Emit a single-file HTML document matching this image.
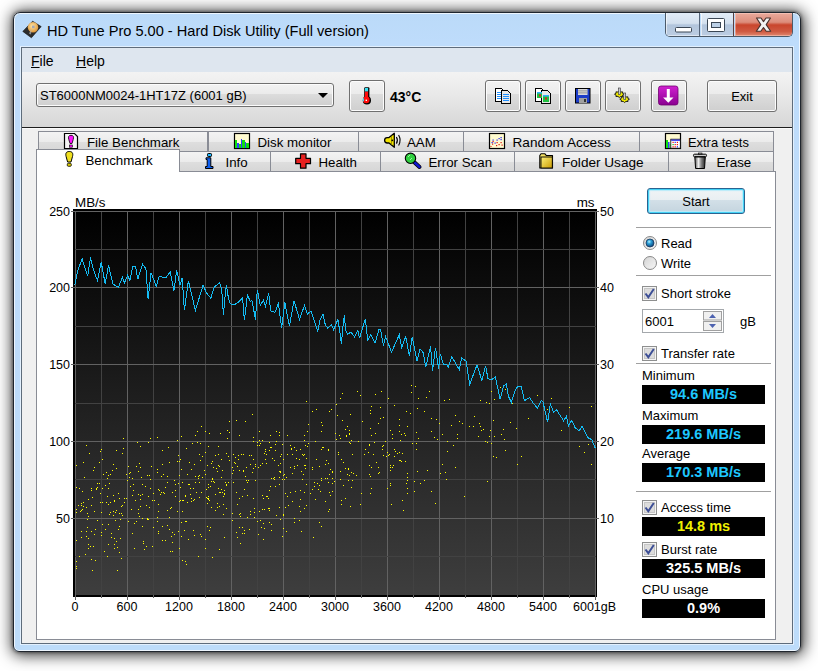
<!DOCTYPE html>
<html><head><meta charset="utf-8">
<style>
*{margin:0;padding:0;box-sizing:border-box}
html,body{width:818px;height:671px;overflow:hidden;background:#fff;font-family:"Liberation Sans",sans-serif;color:#000}
.a{position:absolute}
#win{left:13px;top:12px;width:788px;height:640px;border:1px solid #20262e;border-radius:7px 7px 6px 6px;
 background:linear-gradient(180deg,#bbdaf8 0px,#bedcfb 30px,#bddcfa 100%);
 box-shadow:0 0 3px 1px rgba(0,0,0,.35),1px 1px 15px 2px rgba(0,0,0,.8),inset 0 0 0 1px rgba(255,255,255,.75)}
#client{left:21px;top:47px;width:772px;height:597px;border:1px solid #5e6c7b;background:#f0f0f0;box-shadow:0 0 0 1px rgba(235,245,255,.8)}
#menubar{left:22px;top:48px;width:770px;height:24px;background:#dee6ef}
.menu{font-size:14px;top:53px;line-height:16px}
#toolbar{left:22px;top:72px;width:770px;height:56px;background:linear-gradient(180deg,#f3f3f3 0%,#e9e9e9 40%,#d6d6d6 100%)}
#tbline{left:22px;top:127px;width:770px;height:2px;border-top:1px solid #1e1e1e;border-bottom:1px solid #fbfbfb}
.btn{border:1px solid #707070;border-radius:3px;background:linear-gradient(180deg,#f2f2f2 0%,#ebebeb 45%,#dddddd 45%,#cfcfcf 100%);box-shadow:inset 0 0 0 1px #fcfcfc}
.tab{height:21px;border:1px solid #898c95;border-bottom:none;background:linear-gradient(180deg,#f3f3f3 0%,#ebebeb 50%,#dedede 50%,#d6d6d6 100%)}
.tt{font-size:13.3px;line-height:15px;white-space:nowrap}
#panel{left:36px;top:171px;width:740px;height:469px;border:1px solid #898c95;background:#fff}
.lbl{font-size:12.5px;line-height:14px;white-space:nowrap}
.sep{left:636px;width:135px;height:2px;border-top:1px solid #a0a0a0;border-bottom:1px solid #fff}
.rp{font-size:13px;line-height:15px;white-space:nowrap}
.box{left:642px;width:123px;height:19px;background:#000;font-weight:bold;font-size:14.5px;line-height:19px;text-align:center}
.cb{left:643px;width:13px;height:13px;border:1px solid #8f8f8f;background:linear-gradient(135deg,#dcdcdc,#fff)}
</style></head><body>
<div id="win" class="a"></div>
<!-- title -->
<div class="a" style="left:47px;top:22px;font-size:14.6px;line-height:18px;color:#000;white-space:nowrap" id="title">HD Tune Pro 5.00 - Hard Disk Utility (Full version)</div>
<!-- caption buttons -->
<div class="a" style="left:665px;top:13px;width:128px;height:24px;border:1px solid #4b5a6a;border-top:none;border-radius:0 0 5px 5px;overflow:hidden">
 <div class="a" style="left:0;top:0;width:34px;height:23px;background:linear-gradient(180deg,#e2ecf7 0%,#d3e0ee 45%,#b2c5dc 52%,#bccde2 100%);border-right:1px solid #55657a;box-shadow:inset 1px 0 0 rgba(255,255,255,.6),inset 0 -1px 0 rgba(255,255,255,.5)"></div>
 <div class="a" style="left:35px;top:0;width:33px;height:23px;background:linear-gradient(180deg,#e2ecf7 0%,#d3e0ee 45%,#b2c5dc 52%,#bccde2 100%);border-right:1px solid #5a4040;box-shadow:inset 1px 0 0 rgba(255,255,255,.6),inset 0 -1px 0 rgba(255,255,255,.5)"></div>
 <div class="a" style="left:69px;top:0;width:59px;height:23px;background:linear-gradient(180deg,#eaaa9c 0%,#dc8d7b 40%,#c9452c 52%,#cf5a42 80%,#e08870 100%);box-shadow:inset 0 0 0 1px rgba(255,220,210,.45)"></div>
</div>
<div id="client" class="a"></div>
<div id="menubar" class="a"></div>
<div class="a menu" style="left:31px"><u>F</u>ile</div>
<div class="a menu" style="left:76px"><u>H</u>elp</div>
<div id="toolbar" class="a"></div>
<div id="tbline" class="a"></div>
<!-- dropdown -->
<div class="a btn" style="left:36px;top:83px;width:298px;height:24px"></div>
<div class="a" style="left:40px;top:87.5px;font-size:13px;white-space:nowrap">ST6000NM0024-1HT17Z (6001 gB)</div>
<div class="a" style="left:318px;top:93px;width:0;height:0;border-left:5px solid transparent;border-right:5px solid transparent;border-top:5px solid #000"></div>
<!-- toolbar buttons -->
<div class="a btn" style="left:349px;top:80px;width:36px;height:32px"></div>
<div class="a" style="left:390px;top:89px;font-size:14px;font-weight:bold;white-space:nowrap">43°C</div>
<div class="a btn" style="left:485px;top:80px;width:36px;height:32px"></div>
<div class="a btn" style="left:525px;top:80px;width:36px;height:32px"></div>
<div class="a btn" style="left:565px;top:80px;width:36px;height:32px"></div>
<div class="a btn" style="left:605px;top:80px;width:36px;height:32px"></div>
<div class="a btn" style="left:651px;top:80px;width:36px;height:32px"></div>
<div class="a btn" style="left:707px;top:80px;width:70px;height:32px;font-size:13px;text-align:center;line-height:32px">Exit</div>
<!-- tabs row1 -->
<div class="a tab" style="left:38px;top:131px;width:170px"></div>
<div class="a tab" style="left:208px;top:131px;width:151px"></div>
<div class="a tab" style="left:358px;top:131px;width:106px"></div>
<div class="a tab" style="left:463px;top:131px;width:177px"></div>
<div class="a tab" style="left:639px;top:131px;width:135px"></div>
<!-- tabs row2 -->
<div class="a tab" style="left:179px;top:151px;width:92px"></div>
<div class="a tab" style="left:270px;top:151px;width:111px"></div>
<div class="a tab" style="left:380px;top:151px;width:135px"></div>
<div class="a tab" style="left:514px;top:151px;width:155px"></div>
<div class="a tab" style="left:668px;top:151px;width:106px"></div>
<div id="panel" class="a"></div>
<div class="a tab" style="left:36px;top:149px;width:144px;height:23px;background:#fff"></div>
<div class="a tt" style="left:87px;top:135px">File Benchmark</div>
<div class="a tt" style="left:257.5px;top:135px">Disk monitor</div>
<div class="a tt" style="left:407px;top:135px">AAM</div>
<div class="a tt" style="left:512.5px;top:135px;font-size:13.6px">Random Access</div>
<div class="a tt" style="left:688px;top:135px;font-size:12.9px">Extra tests</div>
<div class="a tt" style="left:85.5px;top:153px">Benchmark</div>
<div class="a tt" style="left:225.5px;top:155px">Info</div>
<div class="a tt" style="left:318.5px;top:155px">Health</div>
<div class="a tt" style="left:428.5px;top:155px">Error Scan</div>
<div class="a tt" style="left:562px;top:155px;font-size:13.6px">Folder Usage</div>
<div class="a tt" style="left:716.5px;top:155px">Erase</div>
<!-- chart -->
<div class="a" style="left:73px;top:209px;width:524px;height:388px;background:#000"></div>
<div class="a" style="left:75px;top:211px;width:521px;height:384px;background:linear-gradient(180deg,#000 0%,#3e3e3e 100%)"></div>
<svg width='818' height='671' style='position:absolute;left:0;top:0'><g stroke-width='1' shape-rendering='crispEdges'><line x1='75.5' y1='211' x2='75.5' y2='595' stroke='#626262'/><line x1='75.5' y1='595' x2='75.5' y2='600' stroke='#626262'/><line x1='101.5' y1='211' x2='101.5' y2='595' stroke='#424242'/><line x1='101.5' y1='595' x2='101.5' y2='598' stroke='#626262'/><line x1='127.5' y1='211' x2='127.5' y2='595' stroke='#626262'/><line x1='127.5' y1='595' x2='127.5' y2='600' stroke='#626262'/><line x1='153.5' y1='211' x2='153.5' y2='595' stroke='#424242'/><line x1='153.5' y1='595' x2='153.5' y2='598' stroke='#626262'/><line x1='179.5' y1='211' x2='179.5' y2='595' stroke='#626262'/><line x1='179.5' y1='595' x2='179.5' y2='600' stroke='#626262'/><line x1='205.5' y1='211' x2='205.5' y2='595' stroke='#424242'/><line x1='205.5' y1='595' x2='205.5' y2='598' stroke='#626262'/><line x1='231.5' y1='211' x2='231.5' y2='595' stroke='#626262'/><line x1='231.5' y1='595' x2='231.5' y2='600' stroke='#626262'/><line x1='257.5' y1='211' x2='257.5' y2='595' stroke='#424242'/><line x1='257.5' y1='595' x2='257.5' y2='598' stroke='#626262'/><line x1='283.5' y1='211' x2='283.5' y2='595' stroke='#626262'/><line x1='283.5' y1='595' x2='283.5' y2='600' stroke='#626262'/><line x1='309.5' y1='211' x2='309.5' y2='595' stroke='#424242'/><line x1='309.5' y1='595' x2='309.5' y2='598' stroke='#626262'/><line x1='335.5' y1='211' x2='335.5' y2='595' stroke='#626262'/><line x1='335.5' y1='595' x2='335.5' y2='600' stroke='#626262'/><line x1='361.5' y1='211' x2='361.5' y2='595' stroke='#424242'/><line x1='361.5' y1='595' x2='361.5' y2='598' stroke='#626262'/><line x1='387.5' y1='211' x2='387.5' y2='595' stroke='#626262'/><line x1='387.5' y1='595' x2='387.5' y2='600' stroke='#626262'/><line x1='413.5' y1='211' x2='413.5' y2='595' stroke='#424242'/><line x1='413.5' y1='595' x2='413.5' y2='598' stroke='#626262'/><line x1='439.5' y1='211' x2='439.5' y2='595' stroke='#626262'/><line x1='439.5' y1='595' x2='439.5' y2='600' stroke='#626262'/><line x1='465.5' y1='211' x2='465.5' y2='595' stroke='#424242'/><line x1='465.5' y1='595' x2='465.5' y2='598' stroke='#626262'/><line x1='491.5' y1='211' x2='491.5' y2='595' stroke='#626262'/><line x1='491.5' y1='595' x2='491.5' y2='600' stroke='#626262'/><line x1='517.5' y1='211' x2='517.5' y2='595' stroke='#424242'/><line x1='517.5' y1='595' x2='517.5' y2='598' stroke='#626262'/><line x1='543.5' y1='211' x2='543.5' y2='595' stroke='#626262'/><line x1='543.5' y1='595' x2='543.5' y2='600' stroke='#626262'/><line x1='569.5' y1='211' x2='569.5' y2='595' stroke='#424242'/><line x1='569.5' y1='595' x2='569.5' y2='598' stroke='#626262'/><line x1='595.5' y1='211' x2='595.5' y2='595' stroke='#626262'/><line x1='595.5' y1='595' x2='595.5' y2='600' stroke='#626262'/><line x1='75' y1='211.5' x2='596' y2='211.5' stroke='#626262'/><line x1='71' y1='211.5' x2='75' y2='211.5' stroke='#626262'/><line x1='596' y1='211.5' x2='599' y2='211.5' stroke='#626262'/><line x1='75' y1='249.5' x2='596' y2='249.5' stroke='#424242'/><line x1='75' y1='287.5' x2='596' y2='287.5' stroke='#626262'/><line x1='71' y1='287.5' x2='75' y2='287.5' stroke='#626262'/><line x1='596' y1='287.5' x2='599' y2='287.5' stroke='#626262'/><line x1='75' y1='326.5' x2='596' y2='326.5' stroke='#424242'/><line x1='75' y1='364.5' x2='596' y2='364.5' stroke='#626262'/><line x1='71' y1='364.5' x2='75' y2='364.5' stroke='#626262'/><line x1='596' y1='364.5' x2='599' y2='364.5' stroke='#626262'/><line x1='75' y1='403.5' x2='596' y2='403.5' stroke='#424242'/><line x1='75' y1='441.5' x2='596' y2='441.5' stroke='#626262'/><line x1='71' y1='441.5' x2='75' y2='441.5' stroke='#626262'/><line x1='596' y1='441.5' x2='599' y2='441.5' stroke='#626262'/><line x1='75' y1='479.5' x2='596' y2='479.5' stroke='#424242'/><line x1='75' y1='518.5' x2='596' y2='518.5' stroke='#626262'/><line x1='71' y1='518.5' x2='75' y2='518.5' stroke='#626262'/><line x1='596' y1='518.5' x2='599' y2='518.5' stroke='#626262'/><line x1='75' y1='556.5' x2='596' y2='556.5' stroke='#424242'/></g></svg><div class='a lbl' style='right:748px;top:204.5px'>250</div><div class='a lbl' style='left:600px;top:204.5px'>50</div><div class='a lbl' style='right:748px;top:281.3px'>200</div><div class='a lbl' style='left:600px;top:281.3px'>40</div><div class='a lbl' style='right:748px;top:358.1px'>150</div><div class='a lbl' style='left:600px;top:358.1px'>30</div><div class='a lbl' style='right:748px;top:434.9px'>100</div><div class='a lbl' style='left:600px;top:434.9px'>20</div><div class='a lbl' style='right:748px;top:511.7px'>50</div><div class='a lbl' style='left:600px;top:511.7px'>10</div><div class='a lbl' style='left:25px;width:100px;text-align:center;top:600px'>0</div><div class='a lbl' style='left:77px;width:100px;text-align:center;top:600px'>600</div><div class='a lbl' style='left:129px;width:100px;text-align:center;top:600px'>1200</div><div class='a lbl' style='left:181px;width:100px;text-align:center;top:600px'>1800</div><div class='a lbl' style='left:233px;width:100px;text-align:center;top:600px'>2400</div><div class='a lbl' style='left:285px;width:100px;text-align:center;top:600px'>3000</div><div class='a lbl' style='left:337px;width:100px;text-align:center;top:600px'>3600</div><div class='a lbl' style='left:389px;width:100px;text-align:center;top:600px'>4200</div><div class='a lbl' style='left:441px;width:100px;text-align:center;top:600px'>4800</div><div class='a lbl' style='left:493px;width:100px;text-align:center;top:600px'>5400</div><div class='a lbl' style='left:573px;top:600px'>6001gB</div><div class='a lbl' style='left:75px;top:196px;font-size:13.4px'>MB/s</div><div class='a lbl' style='right:223.5px;top:196px;font-size:13.4px'>ms</div>
<svg id="chartsvg" width="818" height="671" style="position:absolute;left:0;top:0">
<g fill="#ffff00" shape-rendering="crispEdges" ><rect x='310' y='493' width='1' height='1'/><rect x='339' y='435' width='1' height='1'/><rect x='124' y='498' width='1' height='1'/><rect x='435' y='503' width='1' height='1'/><rect x='415' y='386' width='1' height='1'/><rect x='350' y='414' width='1' height='1'/><rect x='91' y='531' width='1' height='1'/><rect x='345' y='468' width='1' height='1'/><rect x='313' y='537' width='1' height='1'/><rect x='239' y='435' width='1' height='1'/><rect x='76' y='540' width='1' height='1'/><rect x='113' y='511' width='1' height='1'/><rect x='121' y='558' width='1' height='1'/><rect x='137' y='442' width='1' height='1'/><rect x='489' y='436' width='1' height='1'/><rect x='174' y='480' width='1' height='1'/><rect x='136' y='466' width='1' height='1'/><rect x='233' y='454' width='1' height='1'/><rect x='128' y='466' width='1' height='1'/><rect x='229' y='460' width='1' height='1'/><rect x='202' y='477' width='1' height='1'/><rect x='170' y='551' width='1' height='1'/><rect x='205' y='539' width='1' height='1'/><rect x='178' y='531' width='1' height='1'/><rect x='294' y='468' width='1' height='1'/><rect x='199' y='497' width='1' height='1'/><rect x='385' y='441' width='1' height='1'/><rect x='111' y='537' width='1' height='1'/><rect x='394' y='456' width='1' height='1'/><rect x='84' y='477' width='1' height='1'/><rect x='167' y='476' width='1' height='1'/><rect x='263' y='523' width='1' height='1'/><rect x='148' y='496' width='1' height='1'/><rect x='87' y='527' width='1' height='1'/><rect x='241' y='454' width='1' height='1'/><rect x='258' y='534' width='1' height='1'/><rect x='292' y='501' width='1' height='1'/><rect x='400' y='460' width='1' height='1'/><rect x='117' y='570' width='1' height='1'/><rect x='304' y='454' width='1' height='1'/><rect x='91' y='490' width='1' height='1'/><rect x='208' y='487' width='1' height='1'/><rect x='181' y='536' width='1' height='1'/><rect x='305' y='465' width='1' height='1'/><rect x='179' y='548' width='1' height='1'/><rect x='378' y='423' width='1' height='1'/><rect x='219' y='466' width='1' height='1'/><rect x='187' y='502' width='1' height='1'/><rect x='239' y='514' width='1' height='1'/><rect x='114' y='501' width='1' height='1'/><rect x='236' y='420' width='1' height='1'/><rect x='312' y='469' width='1' height='1'/><rect x='149' y='507' width='1' height='1'/><rect x='402' y='500' width='1' height='1'/><rect x='431' y='418' width='1' height='1'/><rect x='81' y='505' width='1' height='1'/><rect x='217' y='503' width='1' height='1'/><rect x='280' y='471' width='1' height='1'/><rect x='143' y='541' width='1' height='1'/><rect x='271' y='524' width='1' height='1'/><rect x='414' y='481' width='1' height='1'/><rect x='186' y='564' width='1' height='1'/><rect x='242' y='496' width='1' height='1'/><rect x='118' y='529' width='1' height='1'/><rect x='328' y='450' width='1' height='1'/><rect x='491' y='443' width='1' height='1'/><rect x='148' y='519' width='1' height='1'/><rect x='190' y='494' width='1' height='1'/><rect x='407' y='473' width='1' height='1'/><rect x='237' y='537' width='1' height='1'/><rect x='184' y='530' width='1' height='1'/><rect x='373' y='454' width='1' height='1'/><rect x='390' y='483' width='1' height='1'/><rect x='283' y='475' width='1' height='1'/><rect x='434' y='437' width='1' height='1'/><rect x='215' y='455' width='1' height='1'/><rect x='323' y='447' width='1' height='1'/><rect x='480' y='400' width='1' height='1'/><rect x='260' y='465' width='1' height='1'/><rect x='139' y='463' width='1' height='1'/><rect x='351' y='440' width='1' height='1'/><rect x='350' y='443' width='1' height='1'/><rect x='407' y='477' width='1' height='1'/><rect x='239' y='498' width='1' height='1'/><rect x='200' y='443' width='1' height='1'/><rect x='485' y='441' width='1' height='1'/><rect x='85' y='554' width='1' height='1'/><rect x='336' y='404' width='1' height='1'/><rect x='131' y='509' width='1' height='1'/><rect x='371' y='406' width='1' height='1'/><rect x='108' y='524' width='1' height='1'/><rect x='245' y='476' width='1' height='1'/><rect x='387' y='488' width='1' height='1'/><rect x='170' y='508' width='1' height='1'/><rect x='177' y='461' width='1' height='1'/><rect x='402' y='453' width='1' height='1'/><rect x='210' y='527' width='1' height='1'/><rect x='451' y='425' width='1' height='1'/><rect x='81' y='531' width='1' height='1'/><rect x='196' y='492' width='1' height='1'/><rect x='418' y='438' width='1' height='1'/><rect x='584' y='452' width='1' height='1'/><rect x='209' y='433' width='1' height='1'/><rect x='270' y='486' width='1' height='1'/><rect x='361' y='493' width='1' height='1'/><rect x='496' y='457' width='1' height='1'/><rect x='99' y='483' width='1' height='1'/><rect x='163' y='474' width='1' height='1'/><rect x='349' y='430' width='1' height='1'/><rect x='416' y='443' width='1' height='1'/><rect x='229' y='432' width='1' height='1'/><rect x='157' y='521' width='1' height='1'/><rect x='464' y='496' width='1' height='1'/><rect x='114' y='500' width='1' height='1'/><rect x='389' y='454' width='1' height='1'/><rect x='181' y='469' width='1' height='1'/><rect x='305' y='445' width='1' height='1'/><rect x='378' y='473' width='1' height='1'/><rect x='457' y='438' width='1' height='1'/><rect x='262' y='495' width='1' height='1'/><rect x='383' y='445' width='1' height='1'/><rect x='205' y='548' width='1' height='1'/><rect x='96' y='488' width='1' height='1'/><rect x='399' y='419' width='1' height='1'/><rect x='120' y='519' width='1' height='1'/><rect x='269' y='442' width='1' height='1'/><rect x='114' y='538' width='1' height='1'/><rect x='474' y='416' width='1' height='1'/><rect x='244' y='530' width='1' height='1'/><rect x='297' y='465' width='1' height='1'/><rect x='116' y='510' width='1' height='1'/><rect x='431' y='431' width='1' height='1'/><rect x='186' y='448' width='1' height='1'/><rect x='222' y='492' width='1' height='1'/><rect x='266' y='496' width='1' height='1'/><rect x='240' y='543' width='1' height='1'/><rect x='204' y='470' width='1' height='1'/><rect x='281' y='454' width='1' height='1'/><rect x='167' y='510' width='1' height='1'/><rect x='87' y='519' width='1' height='1'/><rect x='493' y='456' width='1' height='1'/><rect x='119' y='552' width='1' height='1'/><rect x='119' y='498' width='1' height='1'/><rect x='412' y='443' width='1' height='1'/><rect x='280' y='519' width='1' height='1'/><rect x='332' y='491' width='1' height='1'/><rect x='294' y='522' width='1' height='1'/><rect x='270' y='447' width='1' height='1'/><rect x='227' y='438' width='1' height='1'/><rect x='135' y='500' width='1' height='1'/><rect x='108' y='544' width='1' height='1'/><rect x='94' y='467' width='1' height='1'/><rect x='198' y='478' width='1' height='1'/><rect x='172' y='492' width='1' height='1'/><rect x='237' y='504' width='1' height='1'/><rect x='211' y='507' width='1' height='1'/><rect x='326' y='460' width='1' height='1'/><rect x='349' y='475' width='1' height='1'/><rect x='417' y='408' width='1' height='1'/><rect x='268' y='498' width='1' height='1'/><rect x='157' y='469' width='1' height='1'/><rect x='214' y='482' width='1' height='1'/><rect x='76' y='561' width='1' height='1'/><rect x='118' y='493' width='1' height='1'/><rect x='325' y='501' width='1' height='1'/><rect x='504' y='439' width='1' height='1'/><rect x='157' y='472' width='1' height='1'/><rect x='115' y='520' width='1' height='1'/><rect x='262' y='440' width='1' height='1'/><rect x='315' y='499' width='1' height='1'/><rect x='82' y='509' width='1' height='1'/><rect x='368' y='452' width='1' height='1'/><rect x='490' y='430' width='1' height='1'/><rect x='271' y='447' width='1' height='1'/><rect x='279' y='432' width='1' height='1'/><rect x='505' y='389' width='1' height='1'/><rect x='169' y='529' width='1' height='1'/><rect x='122' y='453' width='1' height='1'/><rect x='287' y='496' width='1' height='1'/><rect x='341' y='500' width='1' height='1'/><rect x='276' y='431' width='1' height='1'/><rect x='283' y='528' width='1' height='1'/><rect x='418' y='398' width='1' height='1'/><rect x='253' y='441' width='1' height='1'/><rect x='158' y='533' width='1' height='1'/><rect x='258' y='467' width='1' height='1'/><rect x='178' y='483' width='1' height='1'/><rect x='119' y='526' width='1' height='1'/><rect x='246' y='467' width='1' height='1'/><rect x='140' y='506' width='1' height='1'/><rect x='358' y='441' width='1' height='1'/><rect x='139' y='516' width='1' height='1'/><rect x='201' y='492' width='1' height='1'/><rect x='360' y='395' width='1' height='1'/><rect x='417' y='471' width='1' height='1'/><rect x='274' y='460' width='1' height='1'/><rect x='179' y='461' width='1' height='1'/><rect x='371' y='435' width='1' height='1'/><rect x='370' y='428' width='1' height='1'/><rect x='424' y='480' width='1' height='1'/><rect x='319' y='485' width='1' height='1'/><rect x='328' y='511' width='1' height='1'/><rect x='288' y='505' width='1' height='1'/><rect x='348' y='480' width='1' height='1'/><rect x='242' y='527' width='1' height='1'/><rect x='383' y='417' width='1' height='1'/><rect x='336' y='439' width='1' height='1'/><rect x='349' y='434' width='1' height='1'/><rect x='198' y='556' width='1' height='1'/><rect x='294' y='466' width='1' height='1'/><rect x='127' y='480' width='1' height='1'/><rect x='569' y='407' width='1' height='1'/><rect x='244' y='533' width='1' height='1'/><rect x='282' y='444' width='1' height='1'/><rect x='92' y='497' width='1' height='1'/><rect x='321' y='478' width='1' height='1'/><rect x='321' y='526' width='1' height='1'/><rect x='180' y='500' width='1' height='1'/><rect x='101' y='512' width='1' height='1'/><rect x='446' y='479' width='1' height='1'/><rect x='307' y='431' width='1' height='1'/><rect x='444' y='400' width='1' height='1'/><rect x='269' y='510' width='1' height='1'/><rect x='194' y='535' width='1' height='1'/><rect x='219' y='492' width='1' height='1'/><rect x='304' y='435' width='1' height='1'/><rect x='387' y='452' width='1' height='1'/><rect x='121' y='506' width='1' height='1'/><rect x='220' y='492' width='1' height='1'/><rect x='588' y='444' width='1' height='1'/><rect x='275' y='450' width='1' height='1'/><rect x='364' y='454' width='1' height='1'/><rect x='480' y='426' width='1' height='1'/><rect x='304' y='508' width='1' height='1'/><rect x='198' y='476' width='1' height='1'/><rect x='334' y='481' width='1' height='1'/><rect x='169' y='462' width='1' height='1'/><rect x='301' y='471' width='1' height='1'/><rect x='113' y='515' width='1' height='1'/><rect x='486' y='402' width='1' height='1'/><rect x='97' y='520' width='1' height='1'/><rect x='213' y='481' width='1' height='1'/><rect x='165' y='487' width='1' height='1'/><rect x='107' y='478' width='1' height='1'/><rect x='579' y='446' width='1' height='1'/><rect x='312' y='411' width='1' height='1'/><rect x='279' y='435' width='1' height='1'/><rect x='93' y='546' width='1' height='1'/><rect x='195' y='476' width='1' height='1'/><rect x='315' y='441' width='1' height='1'/><rect x='96' y='489' width='1' height='1'/><rect x='254' y='512' width='1' height='1'/><rect x='279' y='484' width='1' height='1'/><rect x='187' y='474' width='1' height='1'/><rect x='161' y='476' width='1' height='1'/><rect x='236' y='532' width='1' height='1'/><rect x='274' y='477' width='1' height='1'/><rect x='218' y='446' width='1' height='1'/><rect x='279' y='471' width='1' height='1'/><rect x='263' y='498' width='1' height='1'/><rect x='546' y='416' width='1' height='1'/><rect x='119' y='513' width='1' height='1'/><rect x='345' y='429' width='1' height='1'/><rect x='97' y='483' width='1' height='1'/><rect x='238' y='459' width='1' height='1'/><rect x='442' y='464' width='1' height='1'/><rect x='152' y='500' width='1' height='1'/><rect x='286' y='477' width='1' height='1'/><rect x='227' y='430' width='1' height='1'/><rect x='88' y='538' width='1' height='1'/><rect x='188' y='539' width='1' height='1'/><rect x='404' y='433' width='1' height='1'/><rect x='107' y='496' width='1' height='1'/><rect x='221' y='477' width='1' height='1'/><rect x='162' y='450' width='1' height='1'/><rect x='253' y='459' width='1' height='1'/><rect x='439' y='423' width='1' height='1'/><rect x='108' y='475' width='1' height='1'/><rect x='380' y='418' width='1' height='1'/><rect x='88' y='544' width='1' height='1'/><rect x='211' y='463' width='1' height='1'/><rect x='264' y='528' width='1' height='1'/><rect x='401' y='434' width='1' height='1'/><rect x='219' y='506' width='1' height='1'/><rect x='548' y='413' width='1' height='1'/><rect x='236' y='492' width='1' height='1'/><rect x='175' y='490' width='1' height='1'/><rect x='76' y='487' width='1' height='1'/><rect x='332' y='472' width='1' height='1'/><rect x='255' y='480' width='1' height='1'/><rect x='158' y='504' width='1' height='1'/><rect x='267' y='496' width='1' height='1'/><rect x='199' y='454' width='1' height='1'/><rect x='342' y='393' width='1' height='1'/><rect x='129' y='473' width='1' height='1'/><rect x='160' y='494' width='1' height='1'/><rect x='207' y='503' width='1' height='1'/><rect x='447' y='441' width='1' height='1'/><rect x='249' y='529' width='1' height='1'/><rect x='370' y='476' width='1' height='1'/><rect x='140' y='495' width='1' height='1'/><rect x='171' y='536' width='1' height='1'/><rect x='403' y='510' width='1' height='1'/><rect x='101' y='449' width='1' height='1'/><rect x='224' y='494' width='1' height='1'/><rect x='247' y='482' width='1' height='1'/><rect x='269' y='522' width='1' height='1'/><rect x='223' y='514' width='1' height='1'/><rect x='491' y='391' width='1' height='1'/><rect x='329' y='411' width='1' height='1'/><rect x='369' y='444' width='1' height='1'/><rect x='194' y='464' width='1' height='1'/><rect x='102' y='524' width='1' height='1'/><rect x='116' y='541' width='1' height='1'/><rect x='180' y='487' width='1' height='1'/><rect x='105' y='529' width='1' height='1'/><rect x='219' y='549' width='1' height='1'/><rect x='306' y='458' width='1' height='1'/><rect x='89' y='453' width='1' height='1'/><rect x='262' y='463' width='1' height='1'/><rect x='81' y='510' width='1' height='1'/><rect x='283' y='515' width='1' height='1'/><rect x='442' y='434' width='1' height='1'/><rect x='375' y='433' width='1' height='1'/><rect x='265' y='449' width='1' height='1'/><rect x='124' y='502' width='1' height='1'/><rect x='429' y='391' width='1' height='1'/><rect x='257' y='442' width='1' height='1'/><rect x='285' y='507' width='1' height='1'/><rect x='182' y='500' width='1' height='1'/><rect x='132' y='533' width='1' height='1'/><rect x='189' y='484' width='1' height='1'/><rect x='217' y='507' width='1' height='1'/><rect x='171' y='507' width='1' height='1'/><rect x='405' y='435' width='1' height='1'/><rect x='338' y='454' width='1' height='1'/><rect x='275' y='486' width='1' height='1'/><rect x='343' y='462' width='1' height='1'/><rect x='383' y='455' width='1' height='1'/><rect x='319' y='466' width='1' height='1'/><rect x='284' y='479' width='1' height='1'/><rect x='330' y='495' width='1' height='1'/><rect x='591' y='464' width='1' height='1'/><rect x='206' y='489' width='1' height='1'/><rect x='221' y='459' width='1' height='1'/><rect x='201' y='536' width='1' height='1'/><rect x='489' y='403' width='1' height='1'/><rect x='95' y='560' width='1' height='1'/><rect x='136' y='521' width='1' height='1'/><rect x='113' y='495' width='1' height='1'/><rect x='178' y='455' width='1' height='1'/><rect x='252' y='472' width='1' height='1'/><rect x='388' y='398' width='1' height='1'/><rect x='143' y='543' width='1' height='1'/><rect x='261' y='527' width='1' height='1'/><rect x='237' y='466' width='1' height='1'/><rect x='296' y='458' width='1' height='1'/><rect x='255' y='464' width='1' height='1'/><rect x='223' y='496' width='1' height='1'/><rect x='308' y='443' width='1' height='1'/><rect x='304' y='465' width='1' height='1'/><rect x='424' y='411' width='1' height='1'/><rect x='294' y='518' width='1' height='1'/><rect x='382' y='449' width='1' height='1'/><rect x='121' y='513' width='1' height='1'/><rect x='88' y='499' width='1' height='1'/><rect x='317' y='483' width='1' height='1'/><rect x='110' y='512' width='1' height='1'/><rect x='189' y='462' width='1' height='1'/><rect x='150' y='488' width='1' height='1'/><rect x='162' y='526' width='1' height='1'/><rect x='207' y='526' width='1' height='1'/><rect x='138' y='494' width='1' height='1'/><rect x='88' y='516' width='1' height='1'/><rect x='133' y='490' width='1' height='1'/><rect x='140' y='446' width='1' height='1'/><rect x='341' y='459' width='1' height='1'/><rect x='290' y='445' width='1' height='1'/><rect x='365' y='449' width='1' height='1'/><rect x='517' y='464' width='1' height='1'/><rect x='286' y='531' width='1' height='1'/><rect x='290' y='467' width='1' height='1'/><rect x='157' y='437' width='1' height='1'/><rect x='232' y='520' width='1' height='1'/><rect x='99' y='462' width='1' height='1'/><rect x='133' y='490' width='1' height='1'/><rect x='280' y='472' width='1' height='1'/><rect x='266' y='463' width='1' height='1'/><rect x='299' y='459' width='1' height='1'/><rect x='108' y='504' width='1' height='1'/><rect x='191' y='469' width='1' height='1'/><rect x='327' y='478' width='1' height='1'/><rect x='80' y='511' width='1' height='1'/><rect x='265' y='451' width='1' height='1'/><rect x='392' y='434' width='1' height='1'/><rect x='103' y='474' width='1' height='1'/><rect x='224' y='490' width='1' height='1'/><rect x='240' y='513' width='1' height='1'/><rect x='105' y='485' width='1' height='1'/><rect x='407' y='493' width='1' height='1'/><rect x='376' y='462' width='1' height='1'/><rect x='308' y='424' width='1' height='1'/><rect x='457' y='434' width='1' height='1'/><rect x='134' y='523' width='1' height='1'/><rect x='185' y='521' width='1' height='1'/><rect x='140' y='467' width='1' height='1'/><rect x='300' y='511' width='1' height='1'/><rect x='332' y='471' width='1' height='1'/><rect x='130' y='486' width='1' height='1'/><rect x='180' y='459' width='1' height='1'/><rect x='382' y='446' width='1' height='1'/><rect x='379' y='472' width='1' height='1'/><rect x='437' y='439' width='1' height='1'/><rect x='374' y='442' width='1' height='1'/><rect x='271' y='478' width='1' height='1'/><rect x='328' y='449' width='1' height='1'/><rect x='235' y='463' width='1' height='1'/><rect x='370' y='413' width='1' height='1'/><rect x='494' y='436' width='1' height='1'/><rect x='179' y='475' width='1' height='1'/><rect x='226' y='484' width='1' height='1'/><rect x='205' y='474' width='1' height='1'/><rect x='228' y='456' width='1' height='1'/><rect x='217' y='471' width='1' height='1'/><rect x='392' y='467' width='1' height='1'/><rect x='478' y='436' width='1' height='1'/><rect x='264' y='453' width='1' height='1'/><rect x='268' y='508' width='1' height='1'/><rect x='369' y='465' width='1' height='1'/><rect x='133' y='484' width='1' height='1'/><rect x='369' y='474' width='1' height='1'/><rect x='528' y='418' width='1' height='1'/><rect x='91' y='559' width='1' height='1'/><rect x='346' y='435' width='1' height='1'/><rect x='349' y='433' width='1' height='1'/><rect x='328' y='463' width='1' height='1'/><rect x='146' y='505' width='1' height='1'/><rect x='86' y='531' width='1' height='1'/><rect x='394' y='449' width='1' height='1'/><rect x='92' y='570' width='1' height='1'/><rect x='88' y='548' width='1' height='1'/><rect x='345' y='498' width='1' height='1'/><rect x='76' y='568' width='1' height='1'/><rect x='250' y='464' width='1' height='1'/><rect x='212' y='478' width='1' height='1'/><rect x='197' y='442' width='1' height='1'/><rect x='207' y='498' width='1' height='1'/><rect x='199' y='475' width='1' height='1'/><rect x='208' y='446' width='1' height='1'/><rect x='232' y='513' width='1' height='1'/><rect x='116' y='468' width='1' height='1'/><rect x='291' y='449' width='1' height='1'/><rect x='276' y='515' width='1' height='1'/><rect x='251' y='455' width='1' height='1'/><rect x='322' y='425' width='1' height='1'/><rect x='273' y='478' width='1' height='1'/><rect x='182' y='560' width='1' height='1'/><rect x='253' y='468' width='1' height='1'/><rect x='146' y='546' width='1' height='1'/><rect x='269' y='490' width='1' height='1'/><rect x='113' y='464' width='1' height='1'/><rect x='235' y='457' width='1' height='1'/><rect x='356' y='475' width='1' height='1'/><rect x='191' y='498' width='1' height='1'/><rect x='159' y='490' width='1' height='1'/><rect x='314' y='486' width='1' height='1'/><rect x='175' y='496' width='1' height='1'/><rect x='102' y='502' width='1' height='1'/><rect x='185' y='495' width='1' height='1'/><rect x='335' y='433' width='1' height='1'/><rect x='83' y='462' width='1' height='1'/><rect x='397' y='453' width='1' height='1'/><rect x='240' y='516' width='1' height='1'/><rect x='292' y='454' width='1' height='1'/><rect x='225' y='482' width='1' height='1'/><rect x='378' y='467' width='1' height='1'/><rect x='126' y='498' width='1' height='1'/><rect x='342' y='420' width='1' height='1'/><rect x='215' y='494' width='1' height='1'/><rect x='122' y='515' width='1' height='1'/><rect x='305' y='468' width='1' height='1'/><rect x='208' y='484' width='1' height='1'/><rect x='330' y='469' width='1' height='1'/><rect x='337' y='415' width='1' height='1'/><rect x='491' y='443' width='1' height='1'/><rect x='202' y='456' width='1' height='1'/><rect x='254' y='517' width='1' height='1'/><rect x='109' y='514' width='1' height='1'/><rect x='172' y='551' width='1' height='1'/><rect x='399' y='431' width='1' height='1'/><rect x='407' y='426' width='1' height='1'/><rect x='87' y='513' width='1' height='1'/><rect x='239' y='470' width='1' height='1'/><rect x='247' y='495' width='1' height='1'/><rect x='248' y='480' width='1' height='1'/><rect x='94' y='511' width='1' height='1'/><rect x='462' y='423' width='1' height='1'/><rect x='201' y='426' width='1' height='1'/><rect x='260' y='520' width='1' height='1'/><rect x='291' y='448' width='1' height='1'/><rect x='300' y='490' width='1' height='1'/><rect x='349' y='442' width='1' height='1'/><rect x='154' y='500' width='1' height='1'/><rect x='300' y='499' width='1' height='1'/><rect x='537' y='395' width='1' height='1'/><rect x='142' y='526' width='1' height='1'/><rect x='285' y='493' width='1' height='1'/><rect x='100' y='451' width='1' height='1'/><rect x='321' y='422' width='1' height='1'/><rect x='319' y='522' width='1' height='1'/><rect x='328' y='482' width='1' height='1'/><rect x='138' y='509' width='1' height='1'/><rect x='340' y='479' width='1' height='1'/><rect x='209' y='500' width='1' height='1'/><rect x='265' y='459' width='1' height='1'/><rect x='399' y='452' width='1' height='1'/><rect x='312' y='489' width='1' height='1'/><rect x='271' y='530' width='1' height='1'/><rect x='284' y='474' width='1' height='1'/><rect x='416' y='449' width='1' height='1'/><rect x='193' y='530' width='1' height='1'/><rect x='253' y='437' width='1' height='1'/><rect x='473' y='426' width='1' height='1'/><rect x='282' y='479' width='1' height='1'/><rect x='107' y='556' width='1' height='1'/><rect x='279' y='507' width='1' height='1'/><rect x='206' y='497' width='1' height='1'/><rect x='218' y='488' width='1' height='1'/><rect x='162' y='540' width='1' height='1'/><rect x='226' y='453' width='1' height='1'/><rect x='390' y='485' width='1' height='1'/><rect x='259' y='431' width='1' height='1'/><rect x='218' y='454' width='1' height='1'/><rect x='270' y='435' width='1' height='1'/><rect x='205' y='431' width='1' height='1'/><rect x='213' y='467' width='1' height='1'/><rect x='185' y='496' width='1' height='1'/><rect x='321' y='480' width='1' height='1'/><rect x='371' y='467' width='1' height='1'/><rect x='191' y='501' width='1' height='1'/><rect x='253' y='498' width='1' height='1'/><rect x='164' y='493' width='1' height='1'/><rect x='193' y='488' width='1' height='1'/><rect x='100' y='502' width='1' height='1'/><rect x='357' y='391' width='1' height='1'/><rect x='259' y='511' width='1' height='1'/><rect x='108' y='488' width='1' height='1'/><rect x='167' y='525' width='1' height='1'/><rect x='243' y='470' width='1' height='1'/><rect x='260' y='443' width='1' height='1'/><rect x='211' y='481' width='1' height='1'/><rect x='215' y='510' width='1' height='1'/><rect x='341' y='504' width='1' height='1'/><rect x='399' y='460' width='1' height='1'/><rect x='290' y='467' width='1' height='1'/><rect x='350' y='506' width='1' height='1'/><rect x='192' y='443' width='1' height='1'/><rect x='224' y='537' width='1' height='1'/><rect x='282' y='536' width='1' height='1'/><rect x='114' y='544' width='1' height='1'/><rect x='343' y='485' width='1' height='1'/><rect x='591' y='406' width='1' height='1'/><rect x='407' y='480' width='1' height='1'/><rect x='302' y='479' width='1' height='1'/><rect x='165' y='540' width='1' height='1'/><rect x='188' y='484' width='1' height='1'/><rect x='375' y='394' width='1' height='1'/><rect x='416' y='432' width='1' height='1'/><rect x='249' y='455' width='1' height='1'/><rect x='406' y='483' width='1' height='1'/><rect x='469' y='426' width='1' height='1'/><rect x='148' y='442' width='1' height='1'/><rect x='321' y='431' width='1' height='1'/><rect x='505' y='450' width='1' height='1'/><rect x='561' y='430' width='1' height='1'/><rect x='503' y='429' width='1' height='1'/><rect x='200' y='534' width='1' height='1'/><rect x='110' y='474' width='1' height='1'/><rect x='401' y='461' width='1' height='1'/><rect x='106' y='502' width='1' height='1'/><rect x='101' y='535' width='1' height='1'/><rect x='247' y='517' width='1' height='1'/><rect x='169' y='517' width='1' height='1'/><rect x='369' y='445' width='1' height='1'/><rect x='116' y='450' width='1' height='1'/><rect x='318' y='489' width='1' height='1'/><rect x='102' y='459' width='1' height='1'/><rect x='95' y='529' width='1' height='1'/><rect x='120' y='538' width='1' height='1'/><rect x='551' y='398' width='1' height='1'/><rect x='175' y='484' width='1' height='1'/><rect x='163' y='492' width='1' height='1'/><rect x='153' y='493' width='1' height='1'/><rect x='322' y='447' width='1' height='1'/><rect x='250' y='514' width='1' height='1'/><rect x='279' y='477' width='1' height='1'/><rect x='274' y='479' width='1' height='1'/><rect x='547' y='409' width='1' height='1'/><rect x='172' y='542' width='1' height='1'/><rect x='134' y='548' width='1' height='1'/><rect x='263' y='539' width='1' height='1'/><rect x='150' y='479' width='1' height='1'/><rect x='481' y='430' width='1' height='1'/><rect x='243' y='454' width='1' height='1'/><rect x='212' y='479' width='1' height='1'/><rect x='516' y='428' width='1' height='1'/><rect x='76' y='465' width='1' height='1'/><rect x='218' y='465' width='1' height='1'/><rect x='447' y='451' width='1' height='1'/><rect x='294' y='447' width='1' height='1'/><rect x='431' y='491' width='1' height='1'/><rect x='181' y='436' width='1' height='1'/><rect x='290' y='492' width='1' height='1'/><rect x='106' y='472' width='1' height='1'/><rect x='269' y='450' width='1' height='1'/><rect x='195' y='435' width='1' height='1'/><rect x='351' y='487' width='1' height='1'/><rect x='254' y='508' width='1' height='1'/><rect x='224' y='493' width='1' height='1'/><rect x='81' y='503' width='1' height='1'/><rect x='340' y='398' width='1' height='1'/><rect x='391' y='504' width='1' height='1'/><rect x='226' y='508' width='1' height='1'/><rect x='280' y='463' width='1' height='1'/><rect x='325' y='464' width='1' height='1'/><rect x='283' y='459' width='1' height='1'/><rect x='153' y='527' width='1' height='1'/><rect x='306' y='484' width='1' height='1'/><rect x='186' y='521' width='1' height='1'/><rect x='144' y='549' width='1' height='1'/><rect x='109' y='483' width='1' height='1'/><rect x='390' y='467' width='1' height='1'/><rect x='150' y='438' width='1' height='1'/><rect x='414' y='491' width='1' height='1'/><rect x='183' y='500' width='1' height='1'/><rect x='232' y='473' width='1' height='1'/><rect x='114' y='548' width='1' height='1'/><rect x='242' y='533' width='1' height='1'/><rect x='97' y='487' width='1' height='1'/><rect x='205' y='452' width='1' height='1'/><rect x='250' y='511' width='1' height='1'/><rect x='316' y='409' width='1' height='1'/><rect x='410' y='413' width='1' height='1'/><rect x='142' y='518' width='1' height='1'/><rect x='287' y='454' width='1' height='1'/><rect x='266' y='454' width='1' height='1'/><rect x='276' y='441' width='1' height='1'/><rect x='128' y='521' width='1' height='1'/><rect x='272' y='458' width='1' height='1'/><rect x='208' y='496' width='1' height='1'/><rect x='259' y='440' width='1' height='1'/><rect x='296' y='450' width='1' height='1'/><rect x='245' y='421' width='1' height='1'/><rect x='83' y='506' width='1' height='1'/><rect x='94' y='534' width='1' height='1'/><rect x='262' y='509' width='1' height='1'/><rect x='141' y='477' width='1' height='1'/><rect x='126' y='474' width='1' height='1'/><rect x='321' y='449' width='1' height='1'/><rect x='351' y='472' width='1' height='1'/><rect x='123' y='448' width='1' height='1'/><rect x='303' y='455' width='1' height='1'/><rect x='76' y='512' width='1' height='1'/><rect x='111' y='533' width='1' height='1'/><rect x='346' y='436' width='1' height='1'/><rect x='426' y='397' width='1' height='1'/><rect x='352' y='454' width='1' height='1'/><rect x='158' y='511' width='1' height='1'/><rect x='138' y='513' width='1' height='1'/><rect x='142' y='494' width='1' height='1'/><rect x='302' y='454' width='1' height='1'/><rect x='312' y='467' width='1' height='1'/><rect x='370' y='410' width='1' height='1'/><rect x='262' y='440' width='1' height='1'/><rect x='91' y='488' width='1' height='1'/><rect x='147' y='518' width='1' height='1'/><rect x='167' y='482' width='1' height='1'/><rect x='195' y='482' width='1' height='1'/><rect x='174' y='534' width='1' height='1'/><rect x='233' y='470' width='1' height='1'/><rect x='487' y='481' width='1' height='1'/><rect x='493' y='420' width='1' height='1'/><rect x='181' y='522' width='1' height='1'/><rect x='102' y='488' width='1' height='1'/><rect x='501' y='434' width='1' height='1'/><rect x='252' y='414' width='1' height='1'/><rect x='290' y='467' width='1' height='1'/><rect x='226' y='485' width='1' height='1'/><rect x='331' y='409' width='1' height='1'/><rect x='229' y='421' width='1' height='1'/><rect x='325' y='478' width='1' height='1'/><rect x='306' y='401' width='1' height='1'/><rect x='332' y='478' width='1' height='1'/><rect x='352' y='480' width='1' height='1'/><rect x='521' y='456' width='1' height='1'/><rect x='101' y='532' width='1' height='1'/><rect x='161' y='492' width='1' height='1'/><rect x='329' y='474' width='1' height='1'/><rect x='79' y='556' width='1' height='1'/><rect x='479' y='423' width='1' height='1'/><rect x='455' y='467' width='1' height='1'/><rect x='93' y='470' width='1' height='1'/><rect x='140' y='499' width='1' height='1'/><rect x='132' y='495' width='1' height='1'/><rect x='301' y='531' width='1' height='1'/><rect x='194' y='499' width='1' height='1'/><rect x='390' y='470' width='1' height='1'/><rect x='86' y='507' width='1' height='1'/><rect x='512' y='403' width='1' height='1'/><rect x='212' y='557' width='1' height='1'/><rect x='340' y='471' width='1' height='1'/><rect x='244' y='489' width='1' height='1'/><rect x='185' y='561' width='1' height='1'/><rect x='370' y='493' width='1' height='1'/><rect x='510' y='422' width='1' height='1'/><rect x='329' y='492' width='1' height='1'/><rect x='407' y='488' width='1' height='1'/><rect x='182' y='511' width='1' height='1'/><rect x='132' y='478' width='1' height='1'/><rect x='193' y='500' width='1' height='1'/><rect x='86' y='536' width='1' height='1'/><rect x='394' y='405' width='1' height='1'/><rect x='420' y='483' width='1' height='1'/><rect x='314' y='482' width='1' height='1'/><rect x='264' y='509' width='1' height='1'/><rect x='81' y='537' width='1' height='1'/><rect x='280' y='456' width='1' height='1'/><rect x='234' y='462' width='1' height='1'/><rect x='295' y='491' width='1' height='1'/><rect x='177' y='440' width='1' height='1'/><rect x='232' y='467' width='1' height='1'/><rect x='347' y='426' width='1' height='1'/><rect x='257' y='521' width='1' height='1'/><rect x='104' y='551' width='1' height='1'/><rect x='157' y='517' width='1' height='1'/><rect x='145' y='486' width='1' height='1'/><rect x='112' y='470' width='1' height='1'/><rect x='233' y='482' width='1' height='1'/><rect x='207' y='465' width='1' height='1'/><rect x='115' y='512' width='1' height='1'/><rect x='76' y='509' width='1' height='1'/><rect x='307' y='446' width='1' height='1'/><rect x='427' y='470' width='1' height='1'/><rect x='246' y='480' width='1' height='1'/><rect x='348' y='469' width='1' height='1'/><rect x='257' y='445' width='1' height='1'/><rect x='76' y='566' width='1' height='1'/><rect x='381' y='391' width='1' height='1'/><rect x='393' y='465' width='1' height='1'/><rect x='197' y='431' width='1' height='1'/><rect x='332' y='483' width='1' height='1'/><rect x='238' y='455' width='1' height='1'/><rect x='91' y='505' width='1' height='1'/><rect x='440' y='473' width='1' height='1'/><rect x='453' y='445' width='1' height='1'/><rect x='356' y='475' width='1' height='1'/><rect x='110' y='502' width='1' height='1'/><rect x='259' y='445' width='1' height='1'/><rect x='300' y='449' width='1' height='1'/><rect x='353' y='473' width='1' height='1'/><rect x='212' y='461' width='1' height='1'/><rect x='487' y='442' width='1' height='1'/><rect x='436' y='419' width='1' height='1'/><rect x='222' y='470' width='1' height='1'/><rect x='292' y='473' width='1' height='1'/><rect x='278' y='465' width='1' height='1'/><rect x='78' y='505' width='1' height='1'/><rect x='390' y='430' width='1' height='1'/><rect x='147' y='519' width='1' height='1'/><rect x='147' y='475' width='1' height='1'/><rect x='90' y='546' width='1' height='1'/><rect x='329' y='509' width='1' height='1'/><rect x='494' y='399' width='1' height='1'/><rect x='299' y='520' width='1' height='1'/><rect x='216' y='468' width='1' height='1'/><rect x='151' y='466' width='1' height='1'/><rect x='117' y='547' width='1' height='1'/><rect x='304' y='492' width='1' height='1'/><rect x='287' y='435' width='1' height='1'/><rect x='138' y='471' width='1' height='1'/><rect x='158' y='531' width='1' height='1'/><rect x='411' y='392' width='1' height='1'/><rect x='299' y='506' width='1' height='1'/><rect x='210' y='486' width='1' height='1'/><rect x='182' y='482' width='1' height='1'/><rect x='83' y='502' width='1' height='1'/><rect x='221' y='489' width='1' height='1'/><rect x='209' y='530' width='1' height='1'/><rect x='255' y='466' width='1' height='1'/><rect x='411' y='385' width='1' height='1'/><rect x='392' y='438' width='1' height='1'/><rect x='149' y='475' width='1' height='1'/><rect x='399' y='425' width='1' height='1'/><rect x='371' y='488' width='1' height='1'/><rect x='449' y='399' width='1' height='1'/><rect x='301' y='471' width='1' height='1'/><rect x='390' y='465' width='1' height='1'/><rect x='362' y='421' width='1' height='1'/><rect x='228' y='482' width='1' height='1'/><rect x='168' y='447' width='1' height='1'/><rect x='220' y='433' width='1' height='1'/><rect x='347' y='474' width='1' height='1'/><rect x='400' y='440' width='1' height='1'/><rect x='316' y='459' width='1' height='1'/><rect x='395' y='451' width='1' height='1'/><rect x='269' y='508' width='1' height='1'/><rect x='172' y='532' width='1' height='1'/><rect x='275' y='444' width='1' height='1'/><rect x='405' y='461' width='1' height='1'/><rect x='122' y='515' width='1' height='1'/><rect x='162' y='464' width='1' height='1'/><rect x='445' y='472' width='1' height='1'/><rect x='122' y='505' width='1' height='1'/><rect x='406' y='411' width='1' height='1'/><rect x='304' y='440' width='1' height='1'/><rect x='320' y='491' width='1' height='1'/><rect x='243' y='471' width='1' height='1'/><rect x='100' y='493' width='1' height='1'/><rect x='158' y='489' width='1' height='1'/><rect x='388' y='455' width='1' height='1'/><rect x='199' y='482' width='1' height='1'/><rect x='208' y='498' width='1' height='1'/><rect x='208' y='499' width='1' height='1'/><rect x='303' y='474' width='1' height='1'/><rect x='360' y='504' width='1' height='1'/><rect x='123' y='438' width='1' height='1'/><rect x='500' y='387' width='1' height='1'/><rect x='86' y='445' width='1' height='1'/><rect x='239' y='527' width='1' height='1'/><rect x='200' y='460' width='1' height='1'/><rect x='179' y='501' width='1' height='1'/><rect x='380' y='407' width='1' height='1'/><rect x='338' y='452' width='1' height='1'/><rect x='340' y='438' width='1' height='1'/><rect x='129' y='477' width='1' height='1'/><rect x='177' y='511' width='1' height='1'/><rect x='152' y='546' width='1' height='1'/><rect x='306' y='505' width='1' height='1'/><rect x='483' y='429' width='1' height='1'/><rect x='142' y='484' width='1' height='1'/><rect x='223' y='504' width='1' height='1'/><rect x='283' y='514' width='1' height='1'/><rect x='348' y='468' width='1' height='1'/><rect x='79' y='488' width='1' height='1'/><rect x='455' y='415' width='1' height='1'/><rect x='386' y='456' width='1' height='1'/><rect x='130' y='472' width='1' height='1'/><rect x='459' y='421' width='1' height='1'/><rect x='190' y='488' width='1' height='1'/><rect x='82' y='491' width='1' height='1'/></g>
<path d="M74.8,285.1 L77.7,270.8 L82.1,258.7 L87.6,276.3 L90.5,257.6 L93.1,268.6 L97.5,280.7 L101.2,262.0 L105.2,284.0 L108.5,265.3 L112.9,284.0 L118.4,287.3 L122.4,277.4 L124.6,282.9 L127.7,275.2 L129.9,280.7 L132.7,266.4 L135.6,266.4 L137.8,279.2 L142.6,264.2 L145.9,268.6 L148.1,299.4 L151.0,272.6 L156.3,286.2 L159.1,276.3 L165.7,277.9 L170.1,271.9 L173.9,290.6 L176.7,270.4 L180.0,285.1 L182.2,277.9 L184.4,310.4 L188.4,280.7 L195.4,310.4 L203.1,285.1 L206.4,292.8 L210.8,298.3 L214.1,287.3 L219.2,282.9 L220.6,285.3 L221.8,290.8 L223.4,314.6 L224.9,298.1 L226.4,284.7 L227.9,295.1 L229.8,303.0 L231.6,304.2 L235.3,304.2 L238.3,302.4 L242.6,298.1 L244.4,320.1 L247.5,294.4 L250.0,301.2 L252.0,300.6 L255.5,319.5 L257.3,289.6 L260.3,305.5 L263.4,300.0 L265.5,306.1 L268.7,293.2 L270.7,311.0 L275.0,312.2 L278.4,303.6 L281.7,328.1 L284.8,302.4 L289.4,326.2 L294.0,300.6 L299.5,319.5 L304.4,305.5 L307.4,314.0 L311.1,311.0 L317.8,331.1 L320.0,320.4 L323.0,314.4 L325.4,325.2 L327.7,328.1 L331.3,324.6 L333.7,329.9 L337.9,319.2 L339.7,331.1 L341.5,344.2 L342.6,329.3 L344.4,315.0 L345.6,330.5 L347.4,334.1 L351.0,332.3 L354.6,337.1 L357.9,330.5 L359.6,338.3 L365.3,318.6 L367.7,340.1 L370.7,334.7 L375.1,343.0 L379.0,329.3 L380.5,329.3 L383.4,345.4 L385.6,336.5 L391.5,352.0 L399.3,334.7 L401.6,347.8 L405.8,336.5 L409.4,356.2 L412.2,336.7 L417.1,361.1 L420.0,348.9 L423.2,352.6 L425.7,367.2 L430.6,346.5 L432.5,370.9 L435.5,347.7 L438.6,368.5 L440.3,353.8 L443.5,364.8 L446.5,364.1 L448.4,367.2 L451.8,356.7 L459.2,369.7 L461.6,357.9 L466.0,361.1 L469.7,384.4 L477.0,364.8 L481.9,380.7 L485.6,366.0 L488.0,378.7 L491.7,379.5 L495.4,377.0 L500.0,398.8 L501.6,394.1 L503.4,386.1 L506.4,384.1 L508.3,396.1 L511.4,402.2 L514.7,391.4 L517.4,386.8 L521.4,386.8 L524.4,400.8 L529.5,397.5 L533.5,403.5 L537.5,408.2 L541.3,400.2 L542.9,401.5 L547.6,422.3 L550.3,404.2 L553.6,412.2 L556.3,409.5 L563.7,420.9 L566.4,416.2 L568.4,426.3 L571.7,420.3 L575.1,427.6 L579.1,431.0 L582.0,426.3 L587.8,437.7 L591.8,439.7 L595.4,448.4" fill="none" stroke="#14bcf4" stroke-width="1" stroke-linejoin="miter" shape-rendering="crispEdges" />
</svg>
<svg width="818" height="671" style="position:absolute;left:0;top:0">
<defs>
 <radialGradient id="plat" cx="0.45" cy="0.4" r="0.6"><stop offset="0" stop-color="#ffe7a8"/><stop offset="1" stop-color="#e0983a"/></radialGradient>
 <linearGradient id="trash" x1="0" x2="1" y1="0" y2="0"><stop offset="0" stop-color="#555"/><stop offset="0.35" stop-color="#eee"/><stop offset="0.6" stop-color="#888"/><stop offset="1" stop-color="#222"/></linearGradient>
 <linearGradient id="fold" x1="0" x2="1" y1="0" y2="1"><stop offset="0" stop-color="#fff27a"/><stop offset="1" stop-color="#c89a00"/></linearGradient>
 <linearGradient id="mag" x1="0" x2="0" y1="0" y2="1"><stop offset="0" stop-color="#d020d0"/><stop offset="1" stop-color="#8a0090"/></linearGradient>
</defs>
<!-- title HDD icon -->
<polygon points="32.6,21.2 41.2,26.6 31.4,37.8 22.8,31.4" fill="#2c2c2c" stroke="#111" stroke-width="0.6"/>
<circle cx="33" cy="27.2" r="5.2" fill="url(#plat)"/>
<rect x="32" y="25.6" width="2.6" height="2.6" fill="#a8a8b0"/>
<path d="M31.5,29 L29,33.5 L31,34.5 Z" fill="#bbb" opacity="0.7"/>
<!-- caption glyphs -->
<rect x="675.5" y="27.5" width="16" height="4.5" rx="1" fill="#fff" stroke="#3a4654" stroke-width="1"/>
<rect x="707.5" y="18.5" width="17" height="13" rx="1" fill="#fff" stroke="#3a4654" stroke-width="1"/>
<rect x="711.5" y="22.5" width="9" height="5" fill="#bcd0e6" stroke="#3a4654" stroke-width="1"/>
<path d="M756.5,18 L761,18 L763.5,21.6 L766,18 L770.5,18 L766.2,24.6 L770.7,31.3 L766.2,31.3 L763.5,27.5 L760.8,31.3 L756.3,31.3 L760.8,24.6 Z" fill="#f2f2f2" stroke="#47302c" stroke-width="1.1" stroke-linejoin="round"/>
<!-- dropdown arrow -->
<!-- thermometer -->
<rect x="364.2" y="87.2" width="5.2" height="12" rx="1" fill="#000"/>
<circle cx="366.9" cy="100.4" r="4.1" fill="#000"/>
<rect x="364.9" y="88" width="3.2" height="3.6" fill="#38e0f0"/>
<rect x="364.9" y="91.6" width="3.2" height="8" fill="#ff0a0a"/>
<circle cx="366.3" cy="99.9" r="3.3" fill="#ff0a0a"/>
<rect x="362.9" y="98.3" width="1.1" height="3" fill="#40d8f0"/>
<rect x="365.6" y="99.6" width="1.4" height="1.4" fill="#fff"/>
<!-- copy docs icon -->
<g stroke="#000" stroke-width="1" shape-rendering="crispEdges">
 <path d="M495.5,88.5 H501.5 L503.5,90.5 V101.5 H495.5 Z" fill="#fff"/>
 <path d="M501.5,90.5 H507.5 L510.5,93.5 V103.5 H501.5 Z" fill="#e8e8e8"/>
</g>
<g fill="#2090ff">
 <rect x="497" y="92" width="4" height="1"/><rect x="497" y="94" width="4" height="1"/><rect x="497" y="96" width="4" height="1"/><rect x="497" y="98" width="4" height="1"/>
 <rect x="503" y="94" width="6" height="1"/><rect x="503" y="96" width="6" height="1"/><rect x="503" y="98" width="6" height="1"/><rect x="503" y="100" width="6" height="1"/>
</g>
<!-- copy pictures icon -->
<g stroke="#000" stroke-width="1" shape-rendering="crispEdges">
 <path d="M535.5,88.5 H541.5 L543.5,90.5 V101.5 H535.5 Z" fill="#fff"/>
 <path d="M541.5,90.5 H547.5 L550.5,93.5 V103.5 H541.5 Z" fill="#e8e8e8"/>
</g>
<rect x="537" y="92" width="5" height="6" fill="#20c040"/><rect x="537" y="92" width="5" height="1.5" fill="#30b0ff"/><rect x="539" y="94.5" width="2" height="2" fill="#e02020"/>
<rect x="543" y="95" width="6" height="7" fill="#20c040"/><rect x="543" y="95" width="6" height="1.5" fill="#30b0ff"/><rect x="545" y="97.5" width="2" height="2" fill="#e02020"/>
<!-- floppy -->
<rect x="575.5" y="88.5" width="14.5" height="14.5" fill="#1c3cc8" stroke="#000" stroke-width="1"/>
<rect x="578" y="89" width="9.5" height="6" fill="#d8d8d8"/>
<rect x="578" y="90.5" width="9.5" height="0.8" fill="#888"/><rect x="578" y="92.5" width="9.5" height="0.8" fill="#888"/>
<rect x="579" y="98" width="8" height="5" fill="#a0a0a0"/><rect x="584" y="99" width="2" height="3" fill="#333"/>
<!-- gears -->
<polygon points="624.10,94.20 622.49,95.11 622.69,96.53 620.62,96.40 619.30,97.50 617.98,96.40 615.91,96.53 616.11,95.11 614.50,94.20 616.11,93.29 615.91,91.87 617.98,92.00 619.30,90.90 620.62,92.00 622.69,91.87 622.49,93.29" fill="#f0ea00" stroke="#111" stroke-width="0.9" stroke-linejoin="round"/>
<polygon points="629.40,99.20 627.79,100.11 627.99,101.53 625.92,101.40 624.60,102.50 623.28,101.40 621.21,101.53 621.41,100.11 619.80,99.20 621.41,98.29 621.21,96.87 623.28,97.00 624.60,95.90 625.92,97.00 627.99,96.87 627.79,98.29" fill="#f0ea00" stroke="#111" stroke-width="0.9" stroke-linejoin="round"/>
<rect x="618.4" y="88" width="2" height="6.5" fill="#c8c8d0" stroke="#333" stroke-width="0.6"/>
<rect x="623.7" y="93" width="2" height="6.5" fill="#c8c8d0" stroke="#333" stroke-width="0.6"/>
<!-- purple down arrow -->
<rect x="658.5" y="86" width="19.5" height="19" rx="2.5" fill="url(#mag)" stroke="#700070" stroke-width="0.8"/>
<path d="M666.8,89 H669.8 V97.5 H673.5 L668.3,102.8 L663.1,97.5 H666.8 Z" fill="#fff"/>
<!-- tab: File Benchmark -->
<path d="M64.5,133.5 H74.5 L77.5,136.5 V148.5 H64.5 Z" fill="#f4f4f4" stroke="#000" stroke-width="1.2"/>
<path d="M71,135.3 C73.5,135.3 74,137 73.2,139.5 L72,143.5 H70 L68.8,139.5 C68,137 68.5,135.3 71,135.3 Z" fill="#ff10ff" stroke="#000" stroke-width="0.8"/>
<rect x="69.5" y="145" width="3" height="2.2" fill="#ff10ff" stroke="#000" stroke-width="0.6"/>
<!-- Benchmark yellow ! -->
<path d="M69.3,151.5 C72.5,151.5 73.3,153.5 72.5,156.5 L71,162 H67.6 L66.1,156.5 C65.3,153.5 66.1,151.5 69.3,151.5 Z" fill="#f0e020" stroke="#000" stroke-width="1"/>
<rect x="67.3" y="163.3" width="4" height="3" rx="1" fill="#d8c800" stroke="#000" stroke-width="0.8"/>
<!-- Disk monitor -->
<rect x="234.5" y="133.5" width="15" height="15" fill="#fffbd0" stroke="#000" stroke-width="1.2"/>
<g shape-rendering="crispEdges">
<rect x="235" y="140" width="2" height="8" fill="#10e010"/><rect x="237" y="143" width="1.5" height="5" fill="#3040ff"/><rect x="238.5" y="144" width="2" height="4" fill="#10e010"/>
<rect x="240.5" y="139" width="1" height="9" fill="#3040ff"/><rect x="241.5" y="140" width="3" height="8" fill="#10e010"/><rect x="244.5" y="142" width="1.5" height="6" fill="#3040ff"/><rect x="246" y="143" width="3" height="5" fill="#10e010"/>
</g>
<!-- AAM speaker -->
<path d="M384.6,140.3 Q384.6,137.6 387.3,137.6 L389,137.6 L394.3,133.3 V147.3 L389,143 L387.3,143 Q384.6,143 384.6,140.3 Z" fill="#f2e400" stroke="#000" stroke-width="1.3" stroke-linejoin="round"/>
<line x1="391.5" y1="135.8" x2="391.5" y2="144.8" stroke="#8a8000" stroke-width="0.8"/>
<circle cx="392.3" cy="140.3" r="0.9" fill="#000"/>
<path d="M396.4,137 Q398.4,140.3 396.4,143.6" fill="none" stroke="#000" stroke-width="1.1"/>
<path d="M398.6,135 Q401.6,140.3 398.6,145.6" fill="none" stroke="#000" stroke-width="1.1"/>
<!-- Random Access -->
<rect x="489.5" y="133.5" width="15" height="15" fill="#fffbd0" stroke="#000" stroke-width="1.2"/>
<g fill="#e01010"><rect x="490.5" y="146" width="1" height="1"/><rect x="492" y="143.5" width="1.2" height="1.2"/><rect x="492.5" y="141" width="1.2" height="1.2"/><rect x="496" y="145" width="1.2" height="1.2"/><rect x="496.5" y="142" width="1.2" height="1.2"/><rect x="498.5" y="144" width="1.2" height="1.2"/><rect x="500.5" y="142" width="1.2" height="1.2"/><rect x="501.5" y="144.5" width="1.2" height="1.2"/></g>
<g fill="#2020f0"><rect x="491.5" y="142" width="1.2" height="1.2"/><rect x="492.5" y="139.5" width="1.2" height="1.2"/><rect x="494.5" y="142.5" width="1.2" height="1.2"/><rect x="496.5" y="139.5" width="1.2" height="1.2"/><rect x="498.5" y="138" width="1.2" height="1.2"/><rect x="500.5" y="137" width="1.2" height="1.2"/><rect x="500.5" y="139" width="1.2" height="1.2"/></g>
<!-- Extra tests -->
<rect x="665.5" y="133.5" width="15" height="15" fill="#fffbd0" stroke="#000" stroke-width="1.2"/>
<rect x="666" y="140" width="2" height="8" fill="#10e010"/><rect x="668" y="142" width="1.5" height="6" fill="#3040ff"/><rect x="669.5" y="144" width="1" height="4" fill="#10e010"/>
<rect x="670.8" y="139.2" width="9.5" height="9" fill="#fff" stroke="#000" stroke-width="0.8"/>
<rect x="671.2" y="139.6" width="8.8" height="1.2" fill="#2020f0"/>
<g fill="#f01010"><rect x="672.5" y="141.8" width="1.2" height="1.2"/><rect x="676.8" y="141.8" width="1.2" height="1.2"/><rect x="674.6" y="144" width="1.2" height="1.2"/><rect x="676.8" y="144" width="1.2" height="1.2"/><rect x="672.5" y="146.2" width="1.2" height="1.2"/><rect x="674.6" y="146.2" width="1.2" height="1.2"/></g>
<g fill="#2030f0"><rect x="674.6" y="141.8" width="1.2" height="1.2"/><rect x="676.8" y="146.2" width="1.2" height="1.2"/></g>
<rect x="672.5" y="144" width="1.2" height="1.2" fill="#10c010"/>
<!-- Info i -->
<rect x="207.5" y="153.5" width="4" height="3" rx="0.8" fill="#20b8ff" stroke="#000" stroke-width="1"/>
<path d="M206,157.8 H210.8 V166.5 H213 V168.5 H205.5 V166.5 H207.2 V159.5 H206 Z" fill="#1060f0" stroke="#000" stroke-width="1" stroke-linejoin="round"/>
<!-- Health cross -->
<path d="M300.5,153.8 H306 V158.3 H310.5 V163.7 H306 V168.2 H300.5 V163.7 H295.7 V158.3 H300.5 Z" fill="#e82020" stroke="#000" stroke-width="1.2" stroke-linejoin="round"/>
<!-- Error scan magnifier -->
<line x1="413.5" y1="161.5" x2="419.5" y2="167" stroke="#000" stroke-width="4" stroke-linecap="round"/>
<line x1="413.5" y1="161.5" x2="419.5" y2="167" stroke="#1018d0" stroke-width="2.4" stroke-linecap="round"/>
<circle cx="410.5" cy="158.3" r="5.2" fill="#30d040" stroke="#000" stroke-width="1.1"/>
<path d="M408,157 L410,155 M410,160 L412,158" stroke="#b0ffb0" stroke-width="0.8"/>
<!-- Folder -->
<path d="M539.8,155.5 L541,153.8 H545 L546.3,155.5 H552.5 V168 H539.8 Z" fill="url(#fold)" stroke="#000" stroke-width="1.1" stroke-linejoin="round"/>
<rect x="541" y="157" width="11.3" height="11" fill="url(#fold)" stroke="#000" stroke-width="0.9"/>
<!-- Trash -->
<rect x="693.5" y="154.2" width="13" height="2.5" rx="1" fill="#ccc" stroke="#000" stroke-width="1"/>
<rect x="698.5" y="153" width="3.5" height="1.5" fill="#888" stroke="#000" stroke-width="0.6"/>
<path d="M694.8,157 H705.3 L704.5,168.5 H695.6 Z" fill="url(#trash)" stroke="#000" stroke-width="1"/>
</svg>

<!-- right panel -->
<div class="a" style="left:647px;top:188px;width:98px;height:26px;border:1px solid #2a6390;border-radius:3px;box-shadow:inset 0 0 0 1px #44d2f6,inset 0 0 1px 2px #b8ecfa;background:linear-gradient(180deg,#f0f4f6 0%,#e9eff2 44%,#d3e0e8 45%,#c4d4de 100%);font-size:13px;text-align:center;line-height:25px">Start</div>
<div class="a sep" style="top:227px"></div>
<div class="a sep" style="top:275px"></div>
<div class="a sep" style="top:363px"></div>
<div class="a sep" style="top:491px"></div>
<svg class="a" style="left:636px;top:230px" width="40" height="130">
<defs><radialGradient id="rb" cx="0.4" cy="0.35" r="0.7"><stop offset="0" stop-color="#b8f0ff"/><stop offset="0.35" stop-color="#2aa0d8"/><stop offset="1" stop-color="#0c3a70"/></radialGradient>
<linearGradient id="rg" x1="0" y1="0" x2="1" y2="1"><stop offset="0" stop-color="#d2d2d2"/><stop offset="1" stop-color="#f8f8f8"/></linearGradient></defs>
<circle cx="14" cy="13" r="6.5" fill="url(#rg)" stroke="#8a8a8a" stroke-width="1"/>
<circle cx="14" cy="13" r="4" fill="url(#rb)" stroke="#1a3a60" stroke-width="0.8"/>
<circle cx="14" cy="33" r="6.5" fill="url(#rg)" stroke="#8a8a8a" stroke-width="1"/>
</svg>
<div class="a rp" style="left:661px;top:236px">Read</div>
<div class="a rp" style="left:661px;top:256px">Write</div>
<svg class="a" style="left:642px;top:286px" width="16" height="16"><rect x="0.5" y="0.5" width="14" height="14" fill="#f4f4f4" stroke="#8e8f8f"/><rect x="2.5" y="2.5" width="10" height="10" fill="#dcdcdc" stroke="#c6c6c6"/><path d="M3.5,7.5 L6.3,11.2 L11.8,3" fill="none" stroke="#3d4f96" stroke-width="2"/></svg>
<div class="a rp" style="left:661px;top:286px">Short stroke</div>
<div class="a" style="left:642px;top:309px;width:82px;height:24px;border:1px solid #a4a8ac;background:#fff"></div>
<svg class="a" style="left:702px;top:310px" width="21" height="22">
<rect x="1.5" y="1.5" width="18" height="8.5" fill="#f0f0f0" stroke="#a0a0a0"/>
<rect x="1.5" y="11.5" width="18" height="9" fill="#f0f0f0" stroke="#a0a0a0"/>
<path d="M7,8 H14 L10.5,4 Z" fill="#4d62b0"/>
<path d="M7,14 H14 L10.5,18 Z" fill="#4d62b0"/>
</svg>
<div class="a rp" style="left:645px;top:314px">6001</div>
<div class="a rp" style="left:740px;top:314px">gB</div>
<svg class="a" style="left:642px;top:346px" width="16" height="16"><rect x="0.5" y="0.5" width="14" height="14" fill="#f4f4f4" stroke="#8e8f8f"/><rect x="2.5" y="2.5" width="10" height="10" fill="#dcdcdc" stroke="#c6c6c6"/><path d="M3.5,7.5 L6.3,11.2 L11.8,3" fill="none" stroke="#3d4f96" stroke-width="2"/></svg>
<div class="a rp" style="left:661px;top:346px">Transfer rate</div>
<div class="a rp" style="left:642px;top:368px">Minimum</div>
<div class="a box" style="top:385px;color:#1ec8ff">94.6 MB/s</div>
<div class="a rp" style="left:642px;top:408px">Maximum</div>
<div class="a box" style="top:425px;color:#1ec8ff">219.6 MB/s</div>
<div class="a rp" style="left:642px;top:446px">Average</div>
<div class="a box" style="top:463px;color:#1ec8ff">170.3 MB/s</div>
<svg class="a" style="left:642px;top:500px" width="16" height="16"><rect x="0.5" y="0.5" width="14" height="14" fill="#f4f4f4" stroke="#8e8f8f"/><rect x="2.5" y="2.5" width="10" height="10" fill="#dcdcdc" stroke="#c6c6c6"/><path d="M3.5,7.5 L6.3,11.2 L11.8,3" fill="none" stroke="#3d4f96" stroke-width="2"/></svg>
<div class="a rp" style="left:661px;top:500px">Access time</div>
<div class="a box" style="top:517px;color:#f0f000">14.8 ms</div>
<svg class="a" style="left:642px;top:542px" width="16" height="16"><rect x="0.5" y="0.5" width="14" height="14" fill="#f4f4f4" stroke="#8e8f8f"/><rect x="2.5" y="2.5" width="10" height="10" fill="#dcdcdc" stroke="#c6c6c6"/><path d="M3.5,7.5 L6.3,11.2 L11.8,3" fill="none" stroke="#3d4f96" stroke-width="2"/></svg>
<div class="a rp" style="left:661px;top:542px">Burst rate</div>
<div class="a box" style="top:559px;color:#fff">325.5 MB/s</div>
<div class="a rp" style="left:642px;top:582px">CPU usage</div>
<div class="a box" style="top:599px;color:#fff">0.9%</div>
</body></html>
